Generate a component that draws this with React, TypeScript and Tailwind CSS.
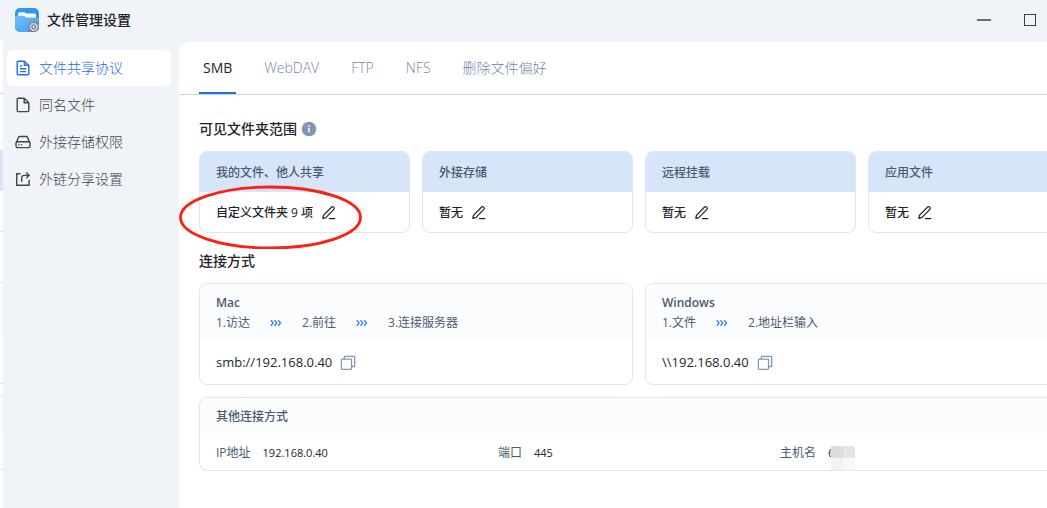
import { useState } from 'react'
import type { ReactNode } from 'react'

const NAV_ITEMS = [
  { label: '文件共享协议', icon: <FileTextIcon /> },
  { label: '同名文件', icon: <FileIcon /> },
  { label: '外接存储权限', icon: <DriveIcon /> },
  { label: '外链分享设置', icon: <ShareIcon /> },
]

const TABS = ['SMB', 'WebDAV', 'FTP', 'NFS', '删除文件偏好']

const FOLDERS = [
  { title: '我的文件、他人共享', value: '自定义文件夹 9 项', marked: true },
  { title: '外接存储', value: '暂无' },
  { title: '远程挂载', value: '暂无' },
  { title: '应用文件', value: '暂无' },
]

const CONNECTIONS = [
  { os: 'Mac', steps: ['1.访达', '2.前往', '3.连接服务器'], address: 'smb://192.168.0.40' },
  { os: 'Windows', steps: ['1.文件', '2.地址栏输入'], address: '\\\\192.168.0.40' },
]

function FileTextIcon() {
  return (
    <svg className="w-4 h-4" viewBox="0 0 16 16" fill="none" stroke="currentColor" strokeWidth="1.4" strokeLinejoin="round">
      <path d="M9.3 1.2H3.2a1 1 0 0 0-1 1v11.6a1 1 0 0 0 1 1h9.6a1 1 0 0 0 1-1V5.4z" />
      <path d="M9.3 1.4v3.8h4.2M5 6h2M5 8.8h6M5 11.6h6" />
    </svg>
  )
}

function FileIcon() {
  return (
    <svg className="w-4 h-4" viewBox="0 0 16 16" fill="none" stroke="currentColor" strokeWidth="1.4" strokeLinejoin="round">
      <path d="M9.2 1.2h-6a1 1 0 0 0-1 1v11.4a1 1 0 0 0 1 1h9.6a1 1 0 0 0 1-1V5.8z" />
      <path d="M9.2 1.4v4.3h4.4" />
    </svg>
  )
}

function DriveIcon() {
  return (
    <svg className="w-4 h-4" viewBox="0 0 16 16" fill="none" stroke="currentColor" strokeWidth="1.4" strokeLinejoin="round">
      <path d="M1.3 8.8 3.5 3.3a1.2 1.2 0 0 1 1.1-.8h6.8a1.2 1.2 0 0 1 1.1.8l2.2 5.5" />
      <rect x="1" y="7.8" width="14" height="5.8" rx="1.5" />
      <path d="M3.4 10.8h1.2M6 10.8h1.2" />
    </svg>
  )
}

function ShareIcon() {
  return (
    <svg className="w-4 h-4" viewBox="0 0 16 16" fill="none" stroke="currentColor" strokeWidth="1.4">
      <path d="M5.5 2.7H1.7v11.6h12.4V8.8" />
      <path d="M6.7 10.8V6.6a2.2 2.2 0 0 1 2.2-2.2h5" />
      <path d="m11.2 1.5 3 2.9-3 2.7" />
    </svg>
  )
}

function PencilIcon() {
  return (
    <svg className="w-4 h-4" viewBox="0 0 16 16" fill="none" stroke="currentColor" strokeWidth="1.2" strokeLinejoin="round" strokeLinecap="round">
      <path d="M1.8 13.4 2.4 10.4 10.6 2a1.3 1.3 0 0 1 1.9 0l.4.4a1.3 1.3 0 0 1 0 1.9L4.8 12.6z" />
      <path d="M8.5 13.6h5.3" />
    </svg>
  )
}

function CopyIcon() {
  return (
    <svg className="w-4 h-4" viewBox="0 0 16 16" fill="none" stroke="currentColor" strokeWidth="1.3" strokeLinejoin="round">
      <path d="M4.3 4.2V2.1a.8.8 0 0 1 .8-.8h8.8a.8.8 0 0 1 .8.8v8.6a.8.8 0 0 1-.8.8h-2.4" />
      <rect x="1.4" y="4.2" width="10.1" height="10.2" rx=".8" />
    </svg>
  )
}

function ArrowsIcon() {
  return (
    <svg className="w-3 h-3" viewBox="0 0 12 12" fill="none" stroke="#2f7bf0" strokeWidth="1.3">
      <path d="m.8 3.2 2.3 2.8L.8 8.8M4.5 3.2 6.800 6l-2.300 2.800M8.200 3.200 10.500 6 8.200 8.800" />
    </svg>
  )
}

function AppLogo() {
  return (
    <svg className="w-6 h-6" viewBox="0 0 24 24">
      <defs>
        <linearGradient id="logo-front" x1="0" y1="0" x2="1" y2="1">
          <stop offset="0" stopColor="#72bef9" />
          <stop offset="1" stopColor="#4499f5" />
        </linearGradient>
      </defs>
      <rect width="24" height="24" rx="5" fill="#2b97ee" />
      <path d="M3 10V6.300a2 2 0 0 1 2-2h4.400l2 1.200H19a2 2 0 0 1 2 2V12H3z" fill="#fff" />
      <path d="M0 9a1.500 1.500 0 0 1 1.500-1.200h6.700c1.400 0 1.800 1.700 3.600 1.700H22a2 2 0 0 1 2 2V19a5 5 0 0 1-5 5H5a5 5 0 0 1-5-5z" fill="url(#logo-front)" />
      <path d="M13 24v-4.500a6 6 0 0 1 6-6h5V19a5 5 0 0 1-5 5z" fill="#75869b" />
      <circle cx="18.700" cy="18.800" r="3.100" fill="none" stroke="#d5dde6" strokeWidth="1.100" />
      <circle cx="18.700" cy="18.800" r="3.900" fill="none" stroke="#d5dde6" strokeWidth="1" strokeDasharray="1.500 1.560" />
      <circle cx="18.700" cy="18.800" r="1.200" fill="#d5dde6" />
    </svg>
  )
}

// Edge of the window lying behind this one
function BackWindow() {
  return (
    <div className="w-[3px] shrink-0 flex flex-col bg-white">
      <div className="h-[41px] bg-[#f0f4f9]" />
      <div className="h-[53px] border-b border-[#d3d9e0]" />
      <div className="h-[49px] border-b border-[#e8ebf0]" />
      <div className="h-[7px]" />
      <div className="h-[41px] bg-[#d6e5f9]" />
      <div className="h-[41px] border-b border-[#dfe5ee]" />
      <div className="h-[51px] border-b border-[#dfe5ee]" />
      <div className="h-[57px] bg-[#fafcfe]" />
      <div className="h-[44px] border-b border-[#dfe5ee]" />
      <div className="h-[13px] border-b border-[#dfe5ee]" />
      <div className="h-[36px] bg-[#fafcfe]" />
      <div className="h-[37px] border-b border-[#dfe5ee]" />
    </div>
  )
}

function Card({ head, headClass, children }: { head: ReactNode; headClass: string; children: ReactNode }) {
  return (
    <div className="rounded-lg border border-[#dfe6f0] bg-white overflow-hidden text-xs">
      <div className={`px-4 ${headClass}`}>{head}</div>
      {children}
    </div>
  )
}

function Field({ label, children }: { label: string; children: ReactNode }) {
  return (
    <div className="flex items-center gap-3">
      <dt className="text-[#4b5a70]">{label}</dt>
      <dd className="text-[11px] text-[#23272e]">{children}</dd>
    </div>
  )
}

export default function App() {
  const [nav, setNav] = useState(0)
  const [tab, setTab] = useState(0)

  return (
    <div className="flex min-h-screen overflow-hidden bg-white font-['Open_Sans','Noto_Sans_CJK_SC',sans-serif] text-sm text-[#1f2329]">
      <BackWindow />

      {/* the window runs past the right edge of the screen */}
      <div className="flex-1 min-w-0 -mr-13 flex flex-col bg-[#f0f4f9]">
        <header className="h-10 mb-0.5 pl-3 pr-[46px] flex items-center justify-between">
          <div className="flex items-center gap-2">
            <AppLogo />
            <h1 className="font-medium">文件管理设置</h1>
          </div>
          <div className="flex">
            <button aria-label="最小化" className="w-[46px] h-10 flex items-center justify-center">
              <span className="w-3.5 h-0.5 bg-[#6b6e72]" />
            </button>
            <button aria-label="最大化" className="w-[46px] h-10 flex items-center justify-center">
              <span className="w-3 h-3 border border-[#3c3f43]" />
            </button>
          </div>
        </header>

        <div className="flex-1 flex">
          <nav className="w-44 shrink-0 pl-1 pr-2 pt-2 flex flex-col gap-px">
            {NAV_ITEMS.map((item, i) => (
              <button
                key={item.label}
                onClick={() => setNav(i)}
                className={`h-9 px-2 flex items-center gap-2 rounded-md font-light ${i === nav ? 'bg-white text-[#1f6fe5]' : 'text-[#42464d]'}`}
              >
                {item.icon}
                {item.label}
              </button>
            ))}
          </nav>

          <main className="flex-1 min-w-0 bg-white rounded-tl-xl">
            <div className="px-5 flex gap-6 border-b border-[#c9d3e2]">
              {TABS.map((label, i) => (
                <button
                  key={label}
                  onClick={() => setTab(i)}
                  className={`h-[52px] px-1 pt-0.5 border-b-2 ${i === tab ? 'border-[#1f6fe5] text-[#1f2329]' : 'border-transparent font-light text-[#7388a6]'}`}
                >
                  {label}
                </button>
              ))}
            </div>

            <div className="px-5 pt-6 pb-8">
              <h2 className="flex items-center gap-1 leading-5 font-medium">
                可见文件夹范围
                <svg className="w-4 h-4" viewBox="0 0 16 16">
                  <circle cx="8" cy="8" r="7.3" fill="#8497b0" />
                  <path d="M8 4.500v1.500M8 7v4.200" stroke="#fff" strokeWidth="1.500" />
                </svg>
              </h2>

              <div className="mt-3 grid grid-cols-4 gap-3">
                {FOLDERS.map(folder => (
                  <div key={folder.title} className="relative">
                    <Card head={folder.title} headClass="h-10 pt-0.5 flex items-center bg-[#d6e5f9] font-medium text-[#4b5a70]">
                      <div className="h-10 px-4 pt-0.5 flex items-center gap-2 font-medium">
                        {folder.value}
                        <button aria-label="编辑">
                          <PencilIcon />
                        </button>
                      </div>
                    </Card>
                    {folder.marked && (
                      <svg className="absolute -left-5 top-[34px] w-[183px] h-16 pointer-events-none" viewBox="0 0 183 64" fill="none">
                        <ellipse cx="91.500" cy="32.500" rx="90" ry="30.500" stroke="#fb2112" strokeWidth="2.800" />
                      </svg>
                    )}
                  </div>
                ))}
              </div>

              <h2 className="mt-[18px] leading-5 font-medium">连接方式</h2>

              <div className="mt-3 grid grid-cols-2 gap-3">
                {CONNECTIONS.map(item => (
                  <Card
                    key={item.os}
                    headClass="pt-[9px] pb-[7px] bg-[#fafcfe] text-[#4b5a70] leading-5"
                    head={
                      <>
                        <h3 className="font-semibold">{item.os}</h3>
                        <ol className="flex items-center gap-5">
                          {item.steps.map((step, i) => (
                            <li key={step} className="flex items-center gap-5">
                              {i > 0 && <ArrowsIcon />}
                              {step}
                            </li>
                          ))}
                        </ol>
                      </>
                    }
                  >
                    <div className="h-11 px-4 pt-0.5 flex items-center gap-2 text-[13px] text-[#23272e]">
                      {item.address}
                      <button aria-label="复制" className="text-[#8497b0]">
                        <CopyIcon />
                      </button>
                    </div>
                  </Card>
                ))}
              </div>

              <div className="mt-3">
                <Card head="其他连接方式" headClass="h-9 pt-0.5 flex items-center bg-[#fafcfe] font-medium text-[#4b5a70]">
                  <dl className="h-9 px-4 pt-0.5 grid grid-cols-3">
                    <Field label="IP地址">192.168.0.40</Field>
                    <Field label="端口">445</Field>
                    <Field label="主机名">
                      <span className="relative">
                        6
                        <span className="absolute left-[3px] top-px w-6 grid grid-cols-2">
                          <span className="h-3 bg-[#dcdedd]" />
                          <span className="h-3 bg-[#e4e6e5]" />
                          <span className="h-3 bg-[#f3f3f3]" />
                          <span className="h-3 bg-[#f8f8f8]" />
                        </span>
                      </span>
                    </Field>
                  </dl>
                </Card>
              </div>
            </div>
          </main>
        </div>
      </div>
    </div>
  )
}
